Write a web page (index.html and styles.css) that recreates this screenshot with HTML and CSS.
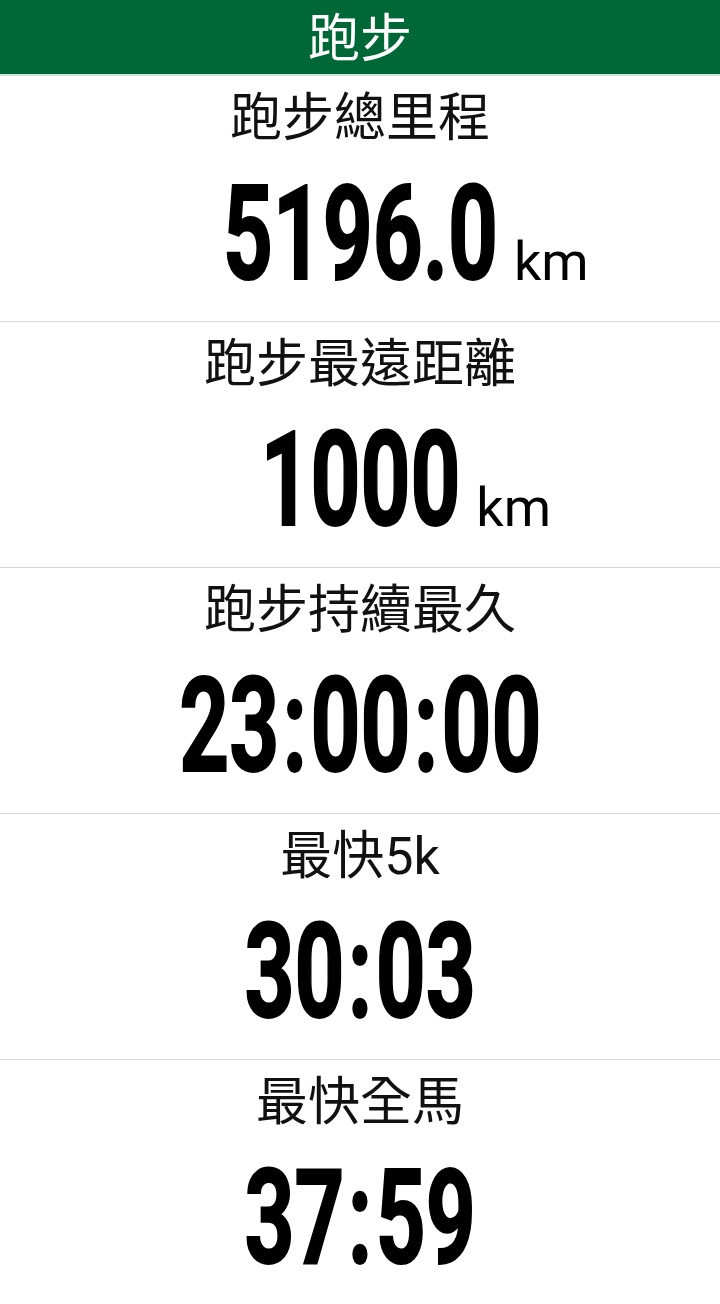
FILE: index.html
```html
<!DOCTYPE html>
<html>
  <head>
    <title>跑步</title>
    <link rel="stylesheet" href="styles.css">
  </head>
  <body>
    <div id="header">跑步</div>

    <div class="stat">
      <div class="label">跑步總里程</div>
      <div class="value"><span class="num">5196.0<span class="unit">km</span></span></div>
    </div>

    <div class="stat">
      <div class="label">跑步最遠距離</div>
      <div class="value"><span class="num">1000<span class="unit">km</span></span></div>
    </div>

    <div class="stat">
      <div class="label">跑步持續最久</div>
      <div class="value"><span class="num">23<i>:</i>00<i>:</i>00</span></div>
    </div>

    <div class="stat">
      <div class="label">最快5k</div>
      <div class="value"><span class="num">30<i>:</i>03</span></div>
    </div>

    <div class="stat">
      <div class="label">最快全馬</div>
      <div class="value"><span class="num">37<i>:</i>59</span></div>
    </div>
  </body>
</html>
```

FILE: styles.css
```css
body {
  margin: 0;
  font-family: Roboto, "Noto Sans CJK TC", sans-serif;
  color: #111;
  background: #fff;
}

#header {
  height: 71px;
  line-height: 74px;
  padding-top: 3px;
  background-color: #006837;
  color: #fff;
  text-align: center;
  font-size: 52px;
  border-bottom: 2px solid #cfe3d6;
}

.stat {
  height: 245px;
  border-bottom: 1px solid #d6d6d6;
  text-align: center;
  overflow: hidden;
}

.label {
  font-size: 52px;
  line-height: 64px;
  padding-top: 11px;
}

.value {
  margin-top: 13px;
  line-height: 140px;
  height: 140px;
}

.num {
  display: inline-block;
  position: relative;
  font-family: Roboto, sans-serif;
  font-weight: bold;
  font-size: 132px;
  -webkit-text-stroke: 2px #000;
  color: #000;
  transform: scaleX(0.66);
}

.num i {
  font-style: normal;
  margin: 0 5px;
}

.unit {
  position: absolute;
  left: 100%;
  bottom: 15px;
  margin-left: 24px;
  font-size: 54px;
  line-height: 54px;
  font-weight: normal;
  -webkit-text-stroke: 0;
  transform: scaleX(1.515);
  transform-origin: left bottom;
}
```
